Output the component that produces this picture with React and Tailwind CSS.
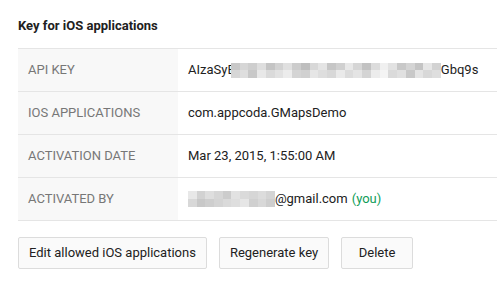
import React from 'react';

const keyBlur = [
  [200, 214, 206, 222, 196, 210, 224, 204, 190, 216, 228, 198, 208, 232, 214, 194, 220, 240, 226, 200, 212, 196, 230, 210],
  [214, 222, 200, 232, 218, 226, 236, 212, 208, 230, 222, 216, 234, 220, 228, 212, 236, 244, 218, 224, 200, 228, 216, 222],
];

const mailBlur = [
  [232, 210, 222, 214, 204, 226, 218, 214, 220, 212],
  [216, 200, 206, 212, 218, 222, 230, 208, 216, 206],
];

function Pixels({ rows, w, h, className = '' }) {
  return (
    <span className={`inline-flex flex-col align-middle ${className}`}>
      {rows.map((row, i) => (
        <span key={i} className="flex">
          {row.map((v, j) => (
            <span key={j} style={{ width: w, height: h, background: `rgb(${v},${v},${v})` }} />
          ))}
        </span>
      ))}
    </span>
  );
}

const rows = [
  {
    label: 'API Key',
    value: (
      <span className="flex items-center">
        AIzaSyE
        {/* redaction blur laid over the last letter */}
        <Pixels rows={keyBlur} w={8.75} h={7.5} className="relative -ml-[4px]" />
        Gbq9s
      </span>
    ),
  },
  { label: 'iOS applications', value: 'com.appcoda.GMapsDemo' },
  { label: 'Activation date', value: 'Mar 23, 2015, 1:55:00 AM' },
  {
    label: 'Activated by',
    value: (
      <span className="flex items-center">
        <Pixels rows={mailBlur} w={8.7} h={8} />
        <span>@gmail.com</span>
        <span className="ml-1 text-[#0f9d58]">(you)</span>
      </span>
    ),
  },
];

export default function App() {
  return (
    <div className="w-[497px] h-[299px] bg-white pl-[18px] font-['Roboto',sans-serif] text-[#212121] overflow-hidden">
      <h2 className="pt-[18px] h-[48px] text-[13px] font-bold leading-[16px]">Key for iOS applications</h2>

      <div className="border-t border-[#e5e5e5]">
        {rows.map((r) => (
          <div key={r.label} className="flex h-[43px] border-b border-[#e5e5e5]">
            <div className="w-[160px] shrink-0 bg-[#f8f8f8] px-[10px] flex items-center text-[13px] uppercase text-[#777]">
              {r.label}
            </div>
            <div className="flex-1 px-[10px] flex items-center text-[13px]">{r.value}</div>
          </div>
        ))}
      </div>

      <div className="flex gap-3 mt-4">
        <button className="h-[32px] px-[10px] border border-[#dcdcdc] rounded-[2px] bg-[#fafafa] text-[13px] text-[#212121]">
          Edit allowed iOS applications
        </button>
        <button className="h-[32px] px-[10px] border border-[#dcdcdc] rounded-[2px] bg-[#fafafa] text-[13px] text-[#212121]">
          Regenerate key
        </button>
        <button className="h-[32px] w-[72px] border border-[#dcdcdc] rounded-[2px] bg-[#fafafa] text-[13px] text-[#212121]">
          Delete
        </button>
      </div>
    </div>
  );
}
